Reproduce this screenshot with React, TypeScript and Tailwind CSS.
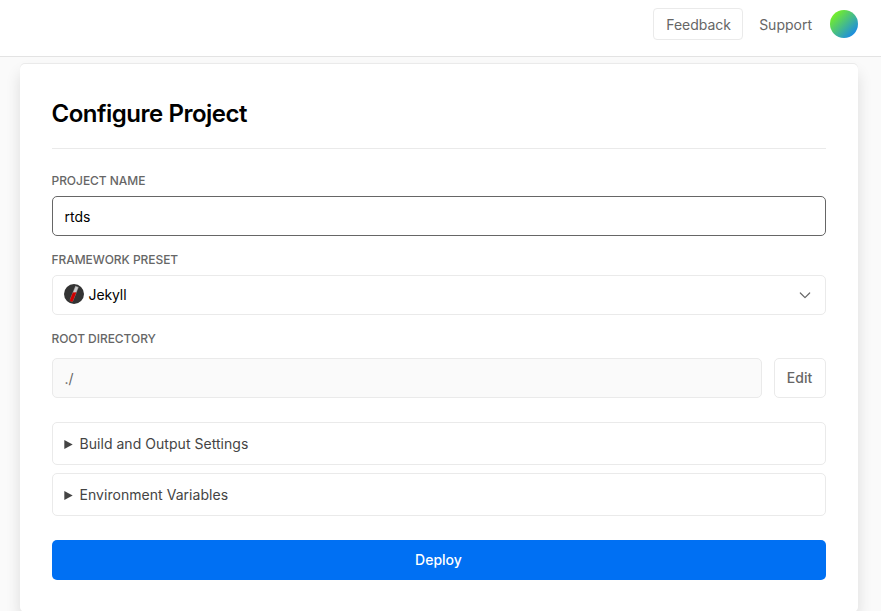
import type { ReactNode } from 'react';

function Label({ children, className = '' }: { children: ReactNode; className?: string }) {
  return <div className={`-ml-[0.5px] h-4 text-xs leading-4 font-medium tracking-[-0.05px] uppercase text-[#666] ${className}`}>{children}</div>;
}

function JekyllIcon() {
  return (
    <svg width="20" height="20" viewBox="0 0 20 20" className="-mt-0.5 shrink-0">
      <circle cx="10" cy="10" r="10" fill="#333" />
      <g transform="rotate(22 10 10)">
        <path d="M8.1 1.8h3.8v14.5a1.9 1.9 0 0 1-3.8 0z" fill="#888" />
        <path d="M8.7 2.4h2.6v6.6H8.7z" fill="#ccc" />
        <path d="M8.4 9l3.2-1.4v8.9a1.6 1.6 0 0 1-3.2 0z" fill="#d00000" />
      </g>
    </svg>
  );
}

function Disclosure({ children }: { children: ReactNode }) {
  return (
    <div className="flex h-[43px] items-center rounded-[5px] border border-[#eaeaea] pl-[11px] text-sm tracking-[0.04px] text-[#444]">
      <svg width="9" height="9" viewBox="0 0 9 9" className="mr-[6.5px] mt-px" fill="#444">
        <path d="M.3 0v9l8.4-4.5z" />
      </svg>
      <span>{children}</span>
    </div>
  );
}

export default function App() {
  return (
    <div className="h-[611px] w-[881px] overflow-hidden bg-[#fafafa] font-['Inter',sans-serif] text-black">
      <header className="flex h-[57px] items-center justify-end border-b border-[#e3e3e3] bg-white pr-[23px] pb-2 text-sm text-[#666]">
        <button className="mr-4 h-8 w-[90px] rounded-[4px] border border-[#eaeaea] pt-0.5 pl-px">Feedback</button>
        <span className="mr-[18px] pt-0.5">Support</span>
        <div className="size-7 rounded-full bg-linear-to-br/srgb from-[#79f51d] from-10% to-[#1686ed] to-90%" />
      </header>
      <main className="mx-[20px] mr-[23px] mt-[7px] h-[548px] rounded-[5px] bg-white px-8 shadow-[0_-1px_0_#eaeaea,0_9px_15px_rgba(0,0,0,0.12)]">
        <h1 className="-ml-[0.5px] flex h-[85px] items-end pb-[19px] text-2xl font-semibold tracking-[-0.02em]">Configure Project</h1>
        <hr className="-mt-px border-[#eaeaea]" />
        <Label className="mt-6">Project Name</Label>
        <div className="mt-[7px] flex h-10 items-center rounded-[5px] border border-[#666] px-[11.5px] pt-0.5 text-sm">rtds</div>
        <Label className="mt-4">Framework Preset</Label>
        <div className="mt-[7px] flex h-10 items-center rounded-[5px] border border-[#eaeaea] pr-3 pl-[11px] text-sm">
          <JekyllIcon />
          <span className="ml-[4.5px] grow tracking-[-0.1px]">Jekyll</span>
          <svg width="16" height="16" viewBox="0 0 24 24" fill="none" stroke="#666" strokeWidth="1.8" strokeLinecap="round" strokeLinejoin="round">
            <path d="m5 9 7 7 7-7" />
          </svg>
        </div>
        <Label className="mt-4">Root Directory</Label>
        <div className="mt-[11px] flex gap-3 text-sm text-[#666]">
          <div className="flex h-10 grow items-center rounded-[5px] border border-[#eaeaea] bg-[#fafafa] px-[11.5px] pt-0.5">./</div>
          <button className="h-10 w-[52px] rounded-[5px] border border-[#eaeaea] pr-px font-medium">Edit</button>
        </div>
        <div className="mt-6 flex flex-col gap-2">
          <Disclosure>Build and Output Settings</Disclosure>
          <Disclosure>Environment Variables</Disclosure>
        </div>
        <button className="mt-6 h-10 w-full rounded-[5px] bg-[#0070f3] pr-px text-sm font-medium text-white">Deploy</button>
      </main>
    </div>
  );
}
